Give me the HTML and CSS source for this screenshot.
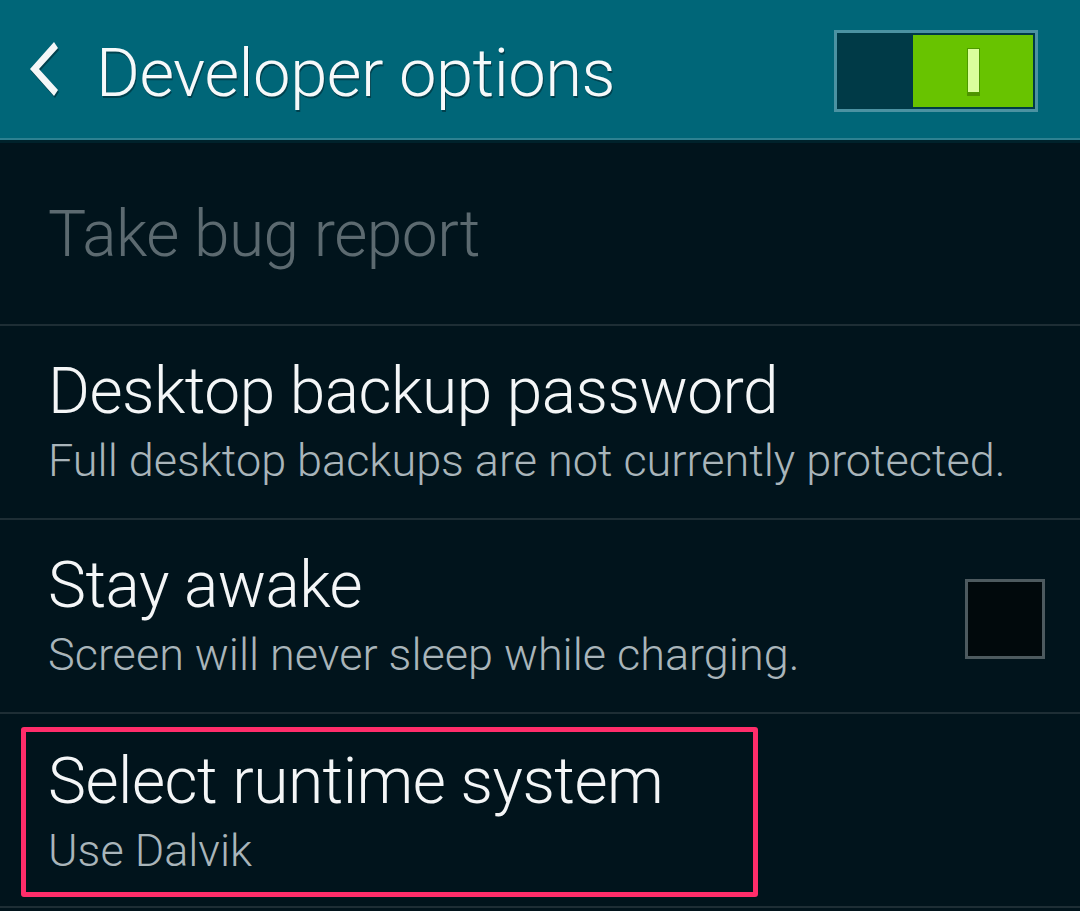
FILE: index.html
```html
<!DOCTYPE html>
<html>

<head>
    <title>Developer options</title>
    <link rel="stylesheet" href="styles.css">
</head>

<body>
    <div class="screen">
        <div class="action-bar">
            <div class="back-title">
                <svg class="back-icon" width="40" height="60" viewBox="0 0 40 60">
                    <path d="M30 2 L34 8 L15 29 L34 50 L30 56 L6 29 Z" fill="#f4f7f8" />
                </svg>
                <h1 class="bar-title">Developer options</h1>
            </div>
            <div class="master-switch">
                <div class="switch-off"></div>
                <div class="switch-on">
                    <div class="switch-mark"></div>
                </div>
            </div>
        </div>

        <div class="pref-list">
            <div class="pref-item pref-disabled">
                <div class="pref-text">
                    <div class="pref-title">Take bug report</div>
                </div>
            </div>

            <div class="pref-item">
                <div class="pref-text">
                    <div class="pref-title">Desktop backup password</div>
                    <div class="pref-summary">Full desktop backups are not currently protected.</div>
                </div>
            </div>

            <div class="pref-item">
                <div class="pref-text">
                    <div class="pref-title">Stay awake</div>
                    <div class="pref-summary">Screen will never sleep while charging.</div>
                </div>
                <div class="checkbox"></div>
            </div>

            <div class="pref-item">
                <div class="pref-text highlighted">
                    <div class="pref-title">Select runtime system</div>
                    <div class="pref-summary">Use Dalvik</div>
                </div>
            </div>
        </div>
    </div>
</body>

</html>
```

FILE: styles.css
```css
body {
    margin: 0;
    padding: 0;
    font-family: Roboto, "Noto Sans", sans-serif;
    font-weight: 300;
    background-color: #01141c;
    overflow: hidden;
}

.screen {
    width: 1080px;
    height: 911px;
}

.action-bar {
    height: 138px;
    background-color: #006678;
    border-bottom: 2px solid #2d8191;
    box-shadow: 0 3px 0 #00222b;
    display: flex;
    align-items: center;
    justify-content: space-between;
    padding: 0 42px 0 24px;
    box-sizing: content-box;
}

.back-title {
    display: flex;
    align-items: center;
}

.back-icon {
    margin-top: 2px;
    filter: drop-shadow(1px 2px 0 rgba(0, 40, 50, 0.6));
}

.bar-title {
    margin: 8px 0 0 32px;
    font-size: 67px;
    font-weight: 300;
    color: #f6f9fa;
    letter-spacing: -0.5px;
    text-shadow: 1px 2px 0 rgba(0, 40, 50, 0.6);
    line-height: 1;
}

.master-switch {
    width: 204px;
    height: 82px;
    box-sizing: border-box;
    border: 3px solid #4b92a2;
    background-color: #003a47;
    display: flex;
    justify-content: flex-end;
    padding: 2px;
    margin-top: 4px;
}

.switch-off {
    flex: 1;
}

.switch-on {
    width: 120px;
    height: 72px;
    background-color: #68c300;
    display: flex;
    align-items: center;
    justify-content: center;
}

.switch-mark {
    width: 11px;
    height: 43px;
    background-color: #dbff9c;
    border: 1px solid #4d9a00;
    box-shadow: 0 3px 0 #4e9300;
    margin-top: -2px;
}

.pref-list {
    margin-top: 3px;
}

.pref-item {
    height: 192px;
    border-bottom: 2px solid #1e2e35;
    display: flex;
    align-items: center;
    justify-content: space-between;
    padding: 0 35px 0 21px;
}

.pref-item:first-child {
    height: 181px;
}

.pref-text {
    border: 5px solid transparent;
    padding: 12px 24px 10px 22px;
    border-radius: 3px;
}

.highlighted {
    border-color: #ff2d6a;
    padding-right: 90px;
    margin-top: 4px;
}

.pref-title {
    font-size: 64px;
    letter-spacing: -0.5px;
    color: #f4f6f7;
    line-height: 76px;
}

.pref-disabled .pref-title {
    color: #5c6a70;
}

.pref-summary {
    font-size: 45px;
    color: #a9b5ba;
    line-height: 62px;
}

.checkbox {
    width: 74px;
    height: 74px;
    border: 3px solid #4d5a5f;
    background-color: #01090c;
    margin-top: 6px;
}
```
